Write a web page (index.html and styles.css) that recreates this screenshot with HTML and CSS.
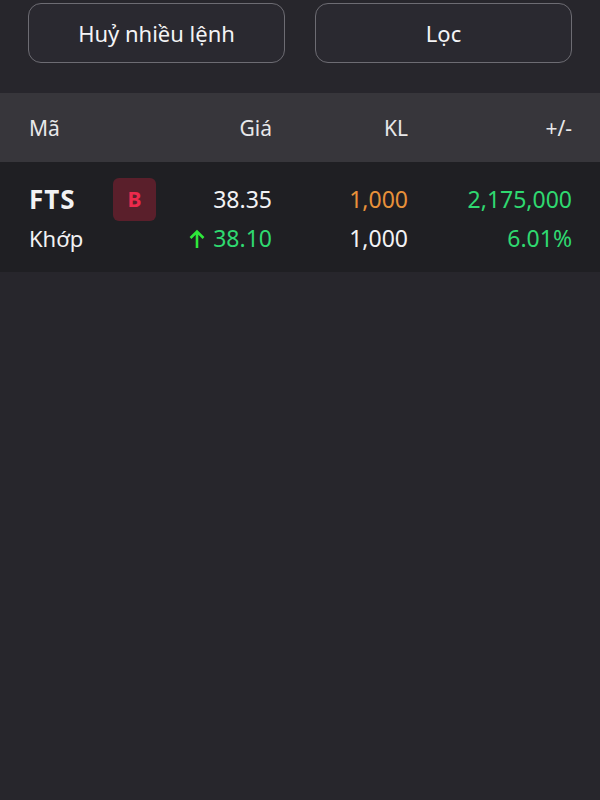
FILE: index.html
```html
<!DOCTYPE html>
<html lang="vi">
<head>
<meta charset="utf-8">
<link rel="stylesheet" href="styles.css">
</head>
<body>
<div class="actions">
  <button class="btn">Huỷ nhiều lệnh</button>
  <button class="btn">Lọc</button>
</div>
<div class="grid head">
  <div class="c-name">Mã</div>
  <div class="c-price">Giá</div>
  <div class="c-vol">KL</div>
  <div class="c-chg">+/-</div>
</div>
<div class="grid row">
  <div class="c-code">FTS</div>
  <div class="c-badge"><span class="badge">B</span></div>
  <div class="c-price">38.35</div>
  <div class="c-vol orange">1,000</div>
  <div class="c-chg green">2,175,000</div>
  <div class="c-status">Khớp</div>
  <div class="c-price green"><svg class="arrow" viewBox="0 0 16 20" width="16" height="20"><path d="M8 19V2.5M1.5 9L8 2.5 14.5 9" fill="none" stroke="#2ee83a" stroke-width="2.6"/></svg>38.10</div>
  <div class="c-vol">1,000</div>
  <div class="c-chg green">6.01%</div>
</div>
</body>
</html>
```
FILE: styles.css
```css
html, body {
  margin: 0;
  padding: 0;
  background: #27262c;
  font-family: "Noto Sans", "Open Sans", sans-serif;
  color: #f2f2f4;
}
.actions {
  display: flex;
  gap: 30px;
  padding: 3px 28px 30px 28px;
}
.btn {
  flex: 1;
  height: 60px;
  border: 1.5px solid #6d6c73;
  border-radius: 13px;
  background: #2a2930;
  color: #f4f4f6;
  font-family: inherit;
  font-size: 22px;
}
.grid {
  display: grid;
  grid-template-columns: 84px 43px 116px 136px 1fr;
  padding: 0 28px 0 29px;
  align-items: center;
}
.head {
  height: 69px;
  background: #37363b;
  font-size: 21px;
  color: #e8e8ea;
}
.head .c-name { grid-column: 1 / 3; }
.c-price, .c-vol, .c-chg { text-align: right; }
.row {
  background: #1f1f23;
  height: 110px;
  grid-template-rows: 42px 36px;
  align-content: center;
  font-size: 23px;
}
.c-code {
  font-weight: 700;
  font-size: 26px;
  letter-spacing: 1px;
}
.c-status { grid-column: 1 / 3; font-size: 22px; }
.badge {
  display: flex;
  align-items: center;
  justify-content: center;
  width: 43px;
  height: 43px;
  border-radius: 6px;
  background: #5a1f2b;
  color: #ec2a4c;
  font-size: 21px;
  font-weight: 700;
}
.orange { color: #e8913a; }
.green { color: #2fd970; }
.arrow { margin-right: 8px; vertical-align: -2px; }
```
